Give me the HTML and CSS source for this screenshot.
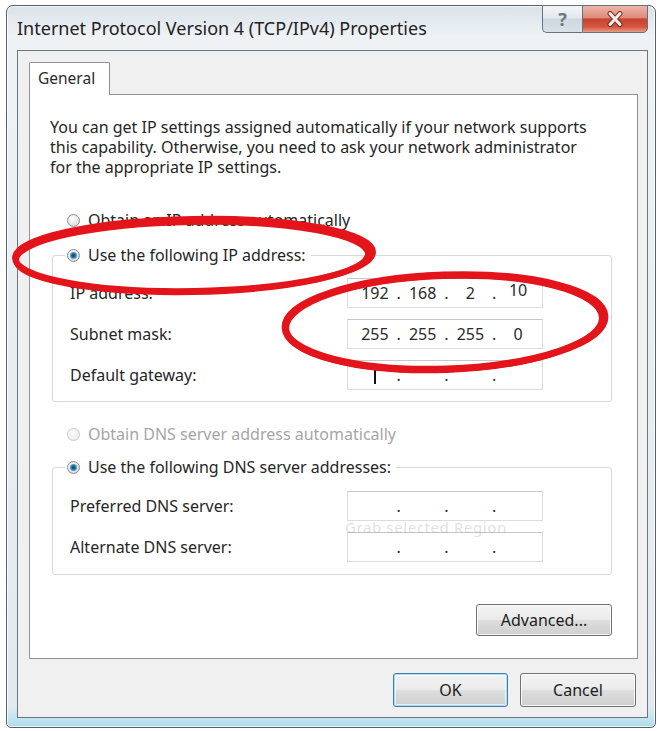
FILE: index.html
```html
<!DOCTYPE html>
<html lang="en">
<head>
<meta charset="utf-8">
<title>Internet Protocol Version 4 (TCP/IPv4) Properties</title>
<link rel="stylesheet" href="styles.css">
</head>
<body>
<div class="window">
  <div class="titlebar">
    <span class="title">Internet Protocol Version 4 (TCP/IPv4) Properties</span>
    <div class="caption-buttons">
      <span class="cap-btn help">?</span>
      <span class="cap-btn close">
        <svg width="20" height="16" viewBox="0 0 20 16">
          <path d="M5 2.5 L15 13.5 M15 2.5 L5 13.5" stroke="#7a2e24" stroke-width="5" stroke-linecap="round" fill="none"/>
          <path d="M5 2.5 L15 13.5 M15 2.5 L5 13.5" stroke="#fbeeea" stroke-width="3" stroke-linecap="round" fill="none"/>
        </svg>
      </span>
    </div>
  </div>
  <div class="client">
    <div class="tabs"><div class="tab">General</div></div>
    <div class="panel">
      <p class="intro">You can get IP settings assigned automatically if your network supports<br>this capability. Otherwise, you need to ask your network administrator<br>for the appropriate IP settings.</p>

      <label class="radio-row standalone"><input class="rb" type="radio" name="ip"><span>Obtain an IP address automatically</span></label>

      <fieldset class="group ip-group">
        <legend><label class="radio-row"><input class="rb" type="radio" name="ip" checked><span>Use the following IP address:</span></label></legend>
        <div class="rows">
          <div class="field-row"><span class="label">IP address:</span>
            <div class="ip-box"><span class="oct">192</span><span class="dot">.</span><span class="oct">168</span><span class="dot">.</span><span class="oct">2</span><span class="dot">.</span><span class="oct"><span class="raised">10</span></span></div>
          </div>
          <div class="field-row"><span class="label">Subnet mask:</span>
            <div class="ip-box"><span class="oct">255</span><span class="dot">.</span><span class="oct">255</span><span class="dot">.</span><span class="oct">255</span><span class="dot">.</span><span class="oct">0</span></div>
          </div>
          <div class="field-row"><span class="label">Default gateway:</span>
            <div class="ip-box"><span class="oct"><span class="caret"></span></span><span class="dot">.</span><span class="oct"></span><span class="dot">.</span><span class="oct"></span><span class="dot">.</span><span class="oct"></span></div>
          </div>
        </div>
      </fieldset>

      <label class="radio-row standalone dns-auto disabled"><input class="rb" type="radio" name="dns" disabled><span>Obtain DNS server address automatically</span></label>

      <fieldset class="group dns-group">
        <legend><label class="radio-row"><input class="rb" type="radio" name="dns" checked><span>Use the following DNS server addresses:</span></label></legend>
        <div class="rows">
          <div class="field-row"><span class="label">Preferred DNS server:</span>
            <div class="ip-box"><span class="oct"></span><span class="dot">.</span><span class="oct"></span><span class="dot">.</span><span class="oct"></span><span class="dot">.</span><span class="oct"></span></div>
          </div>
          <div class="field-row"><span class="label">Alternate DNS server:</span>
            <div class="ip-box"><span class="oct"></span><span class="dot">.</span><span class="oct"></span><span class="dot">.</span><span class="oct"></span><span class="dot">.</span><span class="oct"></span></div>
          </div>
        </div>
      </fieldset>

      <div class="actions"><button class="btn adv" type="button">Advanced...</button></div>

      <div class="ghost">Grab selected Region</div>
    </div>
    <div class="footer">
      <button class="btn default" type="button">OK</button>
      <button class="btn" type="button">Cancel</button>
    </div>
  </div>
</div>
<svg class="annot" width="662" height="731" viewBox="0 0 662 731">
  <g fill="none" stroke="#e3141a">
    <ellipse cx="194" cy="255" rx="179" ry="36" transform="rotate(-1 194 255)" stroke-width="6"/>
    <ellipse cx="192" cy="257" rx="176" ry="35" transform="rotate(-1 192 257)" stroke-width="6"/>
    <ellipse cx="445" cy="322" rx="160" ry="47" transform="rotate(-2 445 322)" stroke-width="7"/>
    <ellipse cx="444" cy="323" rx="158" ry="47" transform="rotate(-2 444 323)" stroke-width="6"/>
  </g>
</svg>
</body>
</html>
```

FILE: styles.css
```css
* { box-sizing: border-box; }

html, body { margin: 0; }

body {
  background: #ffffff;
  padding: 5px 0 0 6px;
  position: relative;
  font-family: "Noto Sans", "Open Sans", sans-serif;
  font-size: 16px;
  line-height: 20px;
  color: #262626;
}

.window {
  width: 650px;
  height: 723px;
  border: 1px solid #56616b;
  border-radius: 7px 7px 5px 5px;
  padding: 0 7px 9px 10px;
  background: linear-gradient(to bottom, #d9e2e9 0, #eef2f5 30px, #e7edf1 50%, #e3eaef 97%, #bfe4ef 99%, #a9dbea 100%);
  box-shadow: inset 0 0 0 1px rgba(255, 255, 255, 0.75);
  display: flex;
  flex-direction: column;
}

.titlebar {
  height: 44px;
  display: flex;
  justify-content: space-between;
  align-items: flex-start;
}

.title {
  padding-top: 12px;
  font-size: 18px;
  line-height: 20px;
  color: #222;
}

.caption-buttons {
  display: flex;
  margin-top: -1px;
  height: 28px;
}

.cap-btn {
  height: 28px;
  display: flex;
  align-items: center;
  justify-content: center;
  border: 1px solid #66727d;
}

.help {
  width: 40px;
  border-right: none;
  border-radius: 0 0 0 5px;
  background: linear-gradient(to bottom, #f3f6f8 0, #e2e8ed 45%, #cdd7df 50%, #d8e1e7 100%);
  color: #6c7782;
  font-weight: bold;
  font-size: 18px;
}

.close {
  width: 66px;
  border-radius: 0 0 5px 0;
  background: linear-gradient(to bottom, #ecb6ab 0, #df8a7a 45%, #c9422f 50%, #d25540 80%, #e59c87 100%);
}

.client {
  flex: 1;
  border: 1px solid #6f777e;
  background: #f0f0f0;
  padding: 11px 9px 10px 11px;
  display: flex;
  flex-direction: column;
}

.tabs { display: flex; }

.tab {
  width: 81px;
  height: 33px;
  border: 1px solid #8e9297;
  border-bottom: none;
  border-radius: 2px 2px 0 0;
  background: #fff;
  margin-bottom: -1px;
  padding: 0 8px;
  line-height: 31px;
  font-size: 15.5px;
  color: #2b2b2b;
  position: relative;
  z-index: 1;
}

.panel {
  height: 565px;
  border: 1px solid #8e9297;
  background: #fff;
  padding: 22px 25px 22px 22px;
  position: relative;
}

.intro {
  margin: 0 0 0 -2px;
  color: #262626;
}

.radio-row {
  display: flex;
  align-items: center;
  gap: 8px;
  height: 20px;
}

.standalone {
  padding-left: 15px;
  margin-top: 33px;
}

.dns-auto { margin-top: 22px; }

.disabled { color: #a5a5a5; }

.rb {
  appearance: none;
  -webkit-appearance: none;
  width: 13px;
  height: 13px;
  margin: 0;
  border-radius: 50%;
  border: 1px solid #8d8f91;
  background: radial-gradient(circle at 40% 35%, #ffffff 0, #e6e6e6 55%, #cfcfcf 100%);
  flex: none;
}

.rb:checked {
  background:
    radial-gradient(circle at 50% 50%, #143f5e 0, #2a6f9c 2px, #6fb7dc 3.4px, rgba(255,255,255,0) 4px),
    radial-gradient(circle at 40% 35%, #ffffff 0, #e2e2e2 55%, #c9c9c9 100%);
}

.rb:disabled {
  border-color: #c9c9c9;
  background: radial-gradient(circle at 40% 35%, #fbfbfb 0, #eeeeee 70%);
}

.group {
  border: 1px solid #d3d9de;
  border-radius: 3px;
  margin: 15px 0 0;
  padding: 13px 0 11px 0;
  min-width: 0;
}

.group legend {
  padding: 0 5px 0 2px;
  margin-left: 12px;
}

.dns-group {
  margin-top: 13px;
  padding-top: 14px;
  padding-bottom: 12px;
}

.rows {
  display: flex;
  flex-direction: column;
  gap: 11px;
}

.field-row {
  display: flex;
  align-items: center;
  height: 30px;
  padding-left: 17px;
}

.label { width: 277px; }

.ip-box {
  width: 196px;
  height: 30px;
  border: 1px solid #dadde0;
  border-top-color: #c5c9cd;
  background: #fff;
  display: flex;
  align-items: center;
  padding: 0 4px 0 7px;
  color: #2a2a2a;
  line-height: 16px;
}

.oct {
  width: 40px;
  text-align: center;
  display: flex;
  justify-content: center;
  align-items: center;
}

.dot {
  width: 8px;
  text-align: center;
}

.raised {
  display: inline-block;
  transform: translateY(-3px);
}

.caret {
  display: block;
  width: 0;
  height: 17px;
  border-left: 2px solid #111;
}

.actions {
  display: flex;
  justify-content: flex-end;
  margin-top: 29px;
}

.btn {
  font: inherit;
  color: #1e1e1e;
  height: 34px;
  width: 115px;
  padding: 0;
  border: 1px solid #707070;
  border-radius: 3px;
  background: linear-gradient(to bottom, #f3f3f3 0, #ebebeb 48%, #dddddd 52%, #cfcfcf 100%);
  box-shadow: inset 0 0 0 1px rgba(255, 255, 255, 0.8);
}

.btn.adv {
  width: 136px;
  height: 32px;
}

.btn.default {
  border-color: #3c7fb1;
  box-shadow: inset 0 0 0 1px #a9dcf5, inset 0 0 0 2px rgba(255, 255, 255, 0.6);
}

.footer {
  display: flex;
  justify-content: flex-end;
  gap: 12px;
  margin-top: 14px;
  padding-right: 2px;
}

.footer .btn:last-child { width: 116px; }

.ghost {
  position: absolute;
  left: 315px;
  top: 426px;
  font-size: 15px;
  letter-spacing: 0.6px;
  line-height: 12px;
  color: rgba(140, 150, 160, 0.3);
  pointer-events: none;
}

.annot {
  position: absolute;
  left: 0;
  top: 0;
  pointer-events: none;
}
```
